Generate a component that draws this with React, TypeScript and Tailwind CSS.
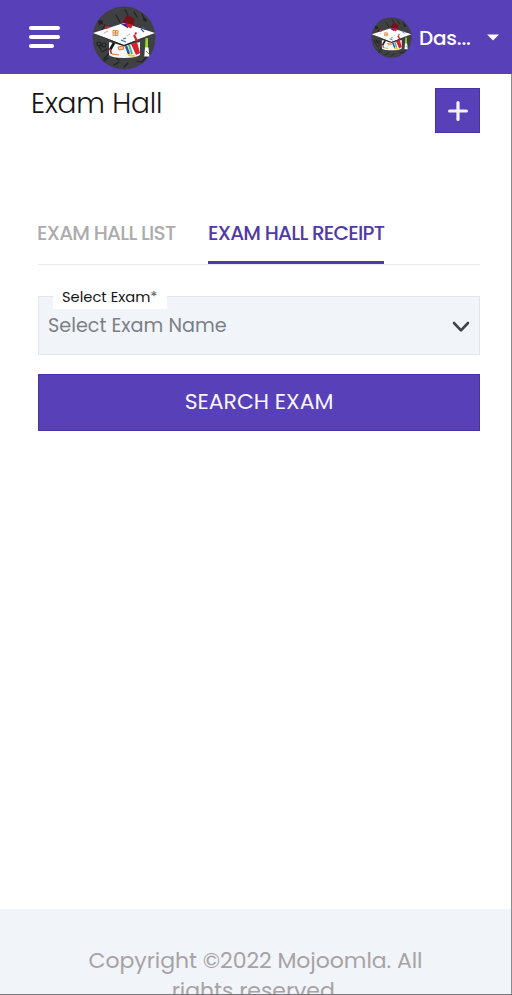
function CapLogo({ size }: { size: number }) {
  return (
    <svg width={size} height={size} viewBox="0 0 64 64" className="shrink-0">
      <circle cx="32" cy="32" r="31.5" fill="#3f4041" />
      <g fill="none" stroke="#202224" strokeWidth="1.2" strokeLinecap="round">
        <path d="M24 9l4 7M33 4l3 5M50 8l2 4M42 6l3 5M13 19l-3 5M16 52l-4 3M27 56l-5 3M36 57l-4 4M10 46l5-3M55 50l-5 6M18 46l-6 7" />
        <circle cx="7" cy="38" r="2" />
        <circle cx="12" cy="39" r="2" />
        <path d="M7 40l2 4M24 52l3 2M45 55l4 1" />
      </g>
      <path d="M6 15l4-1 1 4-4 1zM51 11l4 2-1 3-3-2z" fill="#202224" />
      <path d="M35 9l8 4-3 10-10-6z" fill="#771018" />
      <path d="M17 36v13q3 3 15 3t16-3V36L32 40z" fill="#f7f8fa" />
      <path d="M1 27L32 17l31 10-31 12z" fill="#fff" />
      <path d="M1 27l31 12 31-12-31 13.5z" fill="#24262a" />
      <path d="M29 18l6-.8 1.2 5.2z" fill="#3423a0" />
      <path d="M34 17.5l7 1-2 4-4-2z" fill="#ce2028" />
      <path d="M21 24.5h5v5h-5zM21 27h5M23.5 24.5v5" fill="#ffe3c7" stroke="#dc8541" strokeWidth=".9" />
      <path d="M42 29l3 6M43 27l1.5 1M13 22l4-1" stroke="#d5232c" strokeWidth="2.2" />
      <path d="M49 23l3 3M51 21l2 3M29 34l5 2M31 33l3-1" stroke="#3568bd" strokeWidth="1.3" />
      <path d="M12 27l4-2M35 30l3-2" stroke="#d9a5b2" strokeWidth="1" />
      <path d="M22 37l-4 7" stroke="#161416" strokeWidth="2.6" />
      <path d="M18 43l1.5 5" stroke="#cc2731" strokeWidth="1.6" />
      <path d="M26 41l5-1 1 3-5 1zM20 48l7 1" fill="#ffc49b" stroke="#db782d" strokeWidth="1" />
      <path d="M34 40l3 8" stroke="#2857a0" strokeWidth="2.4" />
      <path d="M37 39l3 9" stroke="#55ab8c" strokeWidth="2" />
      <path d="M39 38l6-2 3 11-4 2z" fill="#d7212c" />
      <path d="M36 49l7 1" stroke="#f3c527" strokeWidth="2" />
      <path d="M53.5 32l2.5 0v10h-3z" fill="#98d32a" />
      <path d="M53 41.5h3.5l.8 9h-5z" fill="#fff" />
      <path d="M54 45l3 3" stroke="#6b9541" strokeWidth="1" />
    </svg>
  );
}

function Header() {
  return (
    <header className="flex h-[74px] items-center bg-[#5840b9] text-white">
      <button className="ml-[29px] flex w-[31px] flex-col gap-[5.5px]" aria-label="Menu">
        <span className="h-[3.5px] w-[31px] rounded-full bg-white" />
        <span className="h-[3.5px] w-[31px] rounded-full bg-white" />
        <span className="h-[3.5px] w-[25px] rounded-full bg-white" />
      </button>
      <div className="ml-8 pt-px">
        <CapLogo size={64} />
      </div>
      <div className="mr-[13px] ml-auto flex items-center pt-px">
        <CapLogo size={41} />
        <span className="ml-[7px] w-[68px] pt-px text-[20px] leading-[30px] font-medium tracking-[-0.2px]">Das...</span>
        <svg width="12" height="7" viewBox="0 0 12 7">
          <path d="M0 .5h12L6 6.5z" fill="white" />
        </svg>
      </div>
    </header>
  );
}

export default function App() {
  return (
    <div className="flex h-[995px] w-[512px] flex-col overflow-hidden border-b border-[#77777b] bg-white font-['Poppins','Inter',sans-serif]">
      <Header />
      <div className="flex min-h-0 flex-1 flex-col border-r border-[#8b8b8e]">
        <main className="flex flex-1 flex-col">
          <div className="flex h-[59px] items-start justify-between pr-[31px] pl-[31px]">
            <h1 className="mt-[10px] text-[28px] leading-[40px] font-light tracking-[-0.2px] whitespace-nowrap text-[#161616]">Exam Hall</h1>
            <button className="mt-[14px] flex size-[45px] items-center justify-center border border-[#4933a1] bg-[#5840b9]" aria-label="Add">
              <svg width="20" height="20" viewBox="0 0 20 20" stroke="#f5f0ff" strokeWidth="3.2" strokeLinecap="round">
                <path d="M10 1.6v16.8M1.6 10h16.8" />
              </svg>
            </button>
          </div>
          <nav className="mt-[77px] mr-[31px] ml-[38px] flex h-[55px] gap-8 border-b border-[#e9e9ec] text-[20px] leading-[30px] font-medium whitespace-nowrap">
            <a className="h-[54px] w-[138px] pt-2 -indent-px tracking-[-0.75px] text-[#acacac]">EXAM HALL LIST</a>
            <a className="h-[54px] w-[176px] border-b-[3px] border-[#4f3aa8] pt-2 tracking-[-0.75px] text-[#4f3aa8]">EXAM HALL RECEIPT</a>
          </nav>
          <div className="relative mt-[31px] mr-[31px] ml-[38px] flex h-[59px] items-center justify-between border border-[#e3e5ec] bg-[#f1f4f9] pr-[9px] pl-[9px]">
            <label className="absolute -top-[12px] left-[14px] h-[24px] w-[114px] bg-white pl-[9px] text-[14.7px] leading-[25px] whitespace-nowrap text-[#161616]">
              Select Exam<span className="text-[#55555a]">*</span>
            </label>
            <span className="text-[19.2px] leading-[30px] whitespace-nowrap text-[#7c8086]">Select Exam Name</span>
            <svg className="mt-[3px]" width="18" height="12" viewBox="0 0 18 12" fill="none" stroke="#3f4349" strokeWidth="2.6" strokeLinecap="round" strokeLinejoin="round">
              <path d="M2 2l7 7.3L16 2" />
            </svg>
          </div>
          <button className="mt-[19px] mr-[31px] ml-[38px] h-[57px] border border-[#4933a1] bg-[#5840b9] pb-[2px] text-[22px] leading-[30px] tracking-[-0.05px] text-[#f9f6ff]">SEARCH EXAM</button>
        </main>
        <footer className="h-[85px] overflow-hidden bg-[#f1f4f9] pt-[37px] text-center text-[22px] leading-[29.5px] tracking-[-0.06px] text-[#a7a3a5]">
          <p>Copyright ©2022 Mojoomla. All</p>
          <p>rights reserved.</p>
        </footer>
      </div>
    </div>
  );
}
